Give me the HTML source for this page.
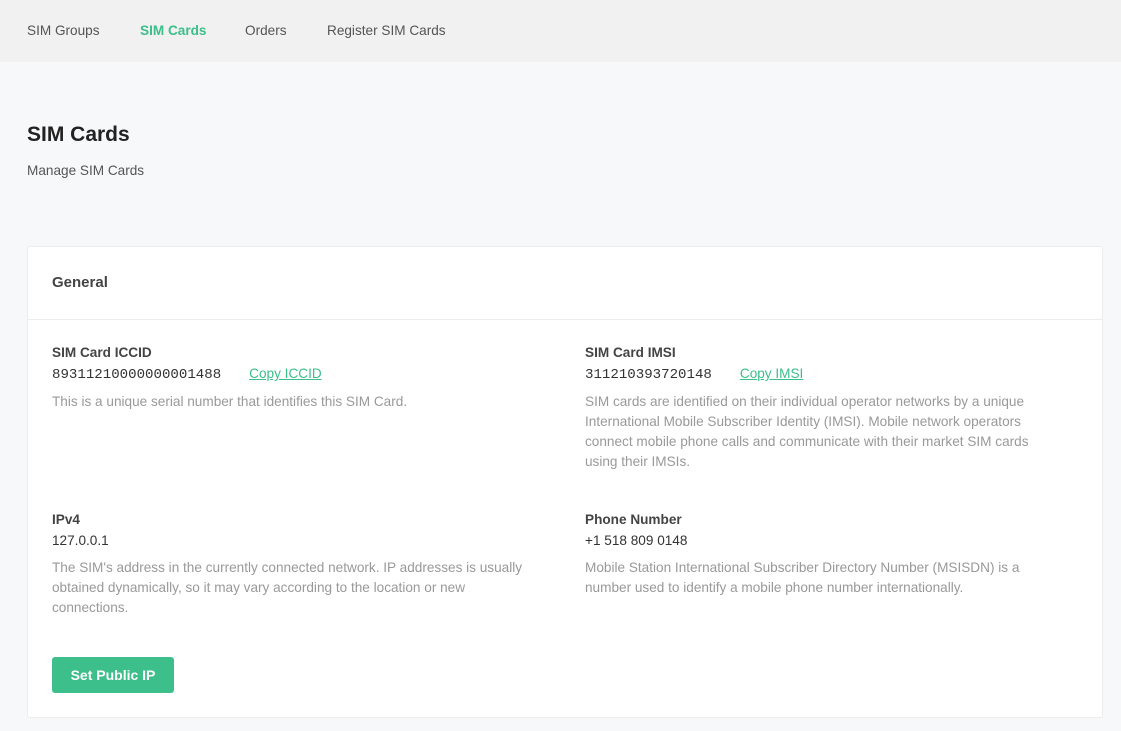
<!DOCTYPE html>
<html><head><style>
body{margin:0;background:#f7f8fa;font-family:"Liberation Sans",sans-serif;width:1121px;height:731px;overflow:hidden;position:relative;color:#4a4a4a}
.nav{position:absolute;left:0;top:0;width:1121px;height:62px;background:#f1f1f1}
.nav span{position:absolute;top:23px;font-size:13.6px;color:#555}
.nav .a{color:#3cbf8a;font-weight:bold}
.t{position:absolute;left:27px;top:123px;font-size:21px;font-weight:bold;color:#222}
.s{position:absolute;left:27px;top:163px;font-size:13.6px;color:#555}
.card{position:absolute;left:27px;top:246px;width:1074px;height:470px;background:#fff;border:1px solid #ececec;border-radius:3px}
.hd{position:absolute;left:0;top:0;width:1074px;height:72px;border-bottom:1px solid #ececec}
.hd b{position:absolute;left:24px;top:27px;font-size:15px;color:#444}
.f{position:absolute;width:470px}
.l{font-size:13.6px;font-weight:bold;color:#444;line-height:18px}
.v{font-size:13.6px;color:#333;line-height:22px;margin-top:1px}
.m{font-family:"Liberation Mono",monospace;font-size:14.1px}
.v a{color:#3cbf8a;text-decoration:underline;font-family:"Liberation Sans",sans-serif;font-size:13.6px;margin-left:28px}
.d{font-size:13.6px;color:#999;line-height:20px;margin-top:6px}
.btn{position:absolute;left:24px;top:410px;width:122px;height:36px;background:#3cbf8a;color:#fff;font-weight:bold;font-size:14px;border-radius:3px;text-align:center;line-height:36px}
</style></head><body>
<div class="nav"><span style="left:27px">SIM Groups</span><span class="a" style="left:140px">SIM Cards</span><span style="left:245px">Orders</span><span style="left:327px">Register SIM Cards</span></div>
<div class="t">SIM Cards</div>
<div class="s">Manage SIM Cards</div>
<div class="card">
<div class="hd"><b>General</b></div>
<div class="f" style="left:24px;top:97px"><div class="l">SIM Card ICCID</div><div class="v"><span class="m">89311210000000001488</span><a>Copy ICCID</a></div><div class="d">This is a unique serial number that identifies this SIM Card.</div></div>
<div class="f" style="left:557px;top:97px"><div class="l">SIM Card IMSI</div><div class="v"><span class="m">311210393720148</span><a>Copy IMSI</a></div><div class="d">SIM cards are identified on their individual operator networks by a unique International Mobile Subscriber Identity (IMSI). Mobile network operators connect mobile phone calls and communicate with their market SIM cards using their IMSIs.</div></div>
<div class="f" style="left:24px;top:264px;width:490px"><div class="l">IPv4</div><div class="v">127.0.0.1</div><div class="d">The SIM's address in the currently connected network. IP addresses is usually obtained dynamically, so it may vary according to the location or new connections.</div></div>
<div class="f" style="left:557px;top:264px"><div class="l">Phone Number</div><div class="v">+1 518 809 0148</div><div class="d">Mobile Station International Subscriber Directory Number (MSISDN) is a number used to identify a mobile phone number internationally.</div></div>
<div class="btn">Set Public IP</div>
</div>
</body></html>
